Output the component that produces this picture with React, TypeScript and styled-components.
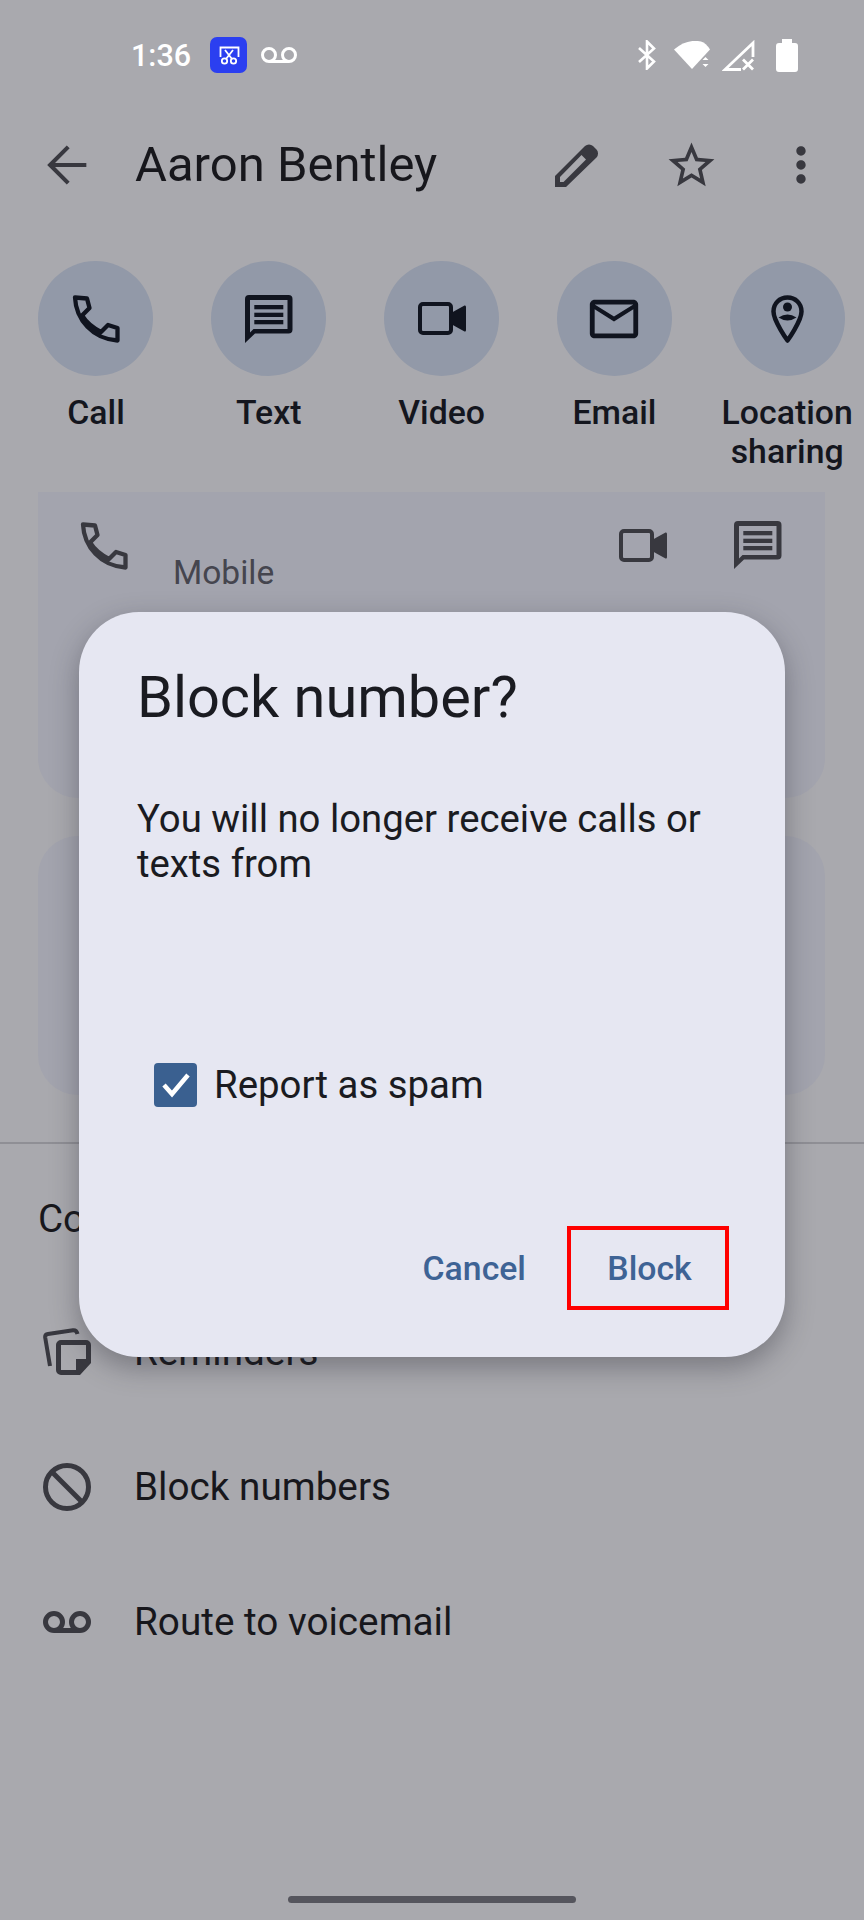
import React from "react";
import styled, { createGlobalStyle } from "styled-components";

const Global = createGlobalStyle`
  html, body { margin: 0; padding: 0; background: #a9a9ae; }
  * { box-sizing: border-box; }
`;

const Page = styled.div`
  position: relative;
  width: 864px;
  height: 1920px;
  overflow: hidden;
  display: flex;
  flex-direction: column;
  background: #a9a9ae;
  color: #17171c;
  font-family: Roboto, "Liberation Sans", sans-serif;
`;

const StatusBar = styled.div`
  height: 110px;
  flex: none;
  display: flex;
  align-items: center;
  padding: 0 66px 0 131px;
  color: #fff;
`;
const Time = styled.span`
  font-size: 30.5px;
  font-weight: 500;
  width: 60px;
  white-space: nowrap;
`;
const Badge = styled.svg`
  width: 37px;
  height: 36px;
  margin-left: 19px;
`;
const StatusGlyph = styled.svg<{ $gap?: number }>`
  display: block;
  flex: none;
  margin-left: ${(p) => p.$gap ?? 0}px;
`;
const StatusRight = styled.div`
  margin-left: auto;
  display: flex;
  align-items: center;
`;

const AppBar = styled.div`
  height: 110px;
  flex: none;
  display: flex;
  align-items: center;
  padding: 0 35px 0 38px;
  color: #38383f;
`;
const Title = styled.h1`
  margin: 0 0 0 39px;
  font-size: 49px;
  line-height: 56px;
  font-weight: 400;
  color: #17171c;
  white-space: nowrap;
`;
const AppBarActions = styled.div`
  margin-left: auto;
  display: flex;
  align-items: center;
`;
const Icon = styled.svg<{ $gap?: number }>`
  display: block;
  flex: none;
  fill: currentColor;
  margin-left: ${(p) => p.$gap ?? 0}px;
`;
const StrokeIcon = styled(Icon)`
  fill: none;
  stroke: currentColor;
  stroke-linejoin: round;
  stroke-linecap: round;
`;

const Actions = styled.div`
  display: grid;
  grid-template-columns: repeat(5, 172.8px);
  margin: 41px 0 0 9.6px;
  height: 231px;
  flex: none;
  color: #10141f;
`;
const Action = styled.div`
  display: flex;
  flex-direction: column;
  align-items: center;
`;
const Circle = styled.div`
  width: 115px;
  height: 115px;
  border-radius: 50%;
  background: #9299a8;
  display: flex;
  align-items: center;
  justify-content: center;
`;
const ActionLabel = styled.div`
  margin-top: 17px;
  font-size: 33.8px;
  line-height: 39px;
  font-weight: 500;
  text-align: center;
  white-space: pre;
  color: #14161e;
`;

const Card = styled.div<{ $h: number; $top?: boolean }>`
  flex: none;
  width: 787px;
  height: ${(p) => p.$h}px;
  margin-left: 38px;
  background: #a3a4ae;
  border-radius: ${(p) => (p.$top ? "40px" : "0")} ${(p) => (p.$top ? "40px" : "0")} 40px 40px;
`;
const NumberRow = styled.div`
  display: flex;
  align-items: flex-start;
  padding: 30px 43px 0 42px;
  color: #38383f;
`;
const NumberType = styled.div`
  margin: 33px 0 0 45px;
  font-size: 33.5px;
  line-height: 36px;
  color: #45454e;
`;
const NumberActions = styled.div`
  margin: -1px 0 0 auto;
  display: flex;
  align-items: center;
`;
const SecondCard = styled(Card)`
  margin-top: 38px;
`;
const Divider = styled.div`
  flex: none;
  height: 2px;
  margin-top: 47px;
  background: #8f8f95;
`;
const SectionTitle = styled.div`
  flex: none;
  margin: 52px 0 0 38px;
  font-size: 38.6px;
  line-height: 46px;
  white-space: nowrap;
`;
const SettingsList = styled.div`
  flex: none;
  margin-top: 42px;
  color: #38383f;
`;
const SettingRow = styled.div`
  height: 135px;
  display: flex;
  align-items: center;
`;
const SettingIcon = styled.div`
  width: 134px;
  display: flex;
  justify-content: center;
`;
const SettingText = styled.div`
  font-size: 38.7px;
  line-height: 46px;
  color: #17171c;
  white-space: nowrap;
`;
const HomeBar = styled.div`
  margin: auto auto 17px;
  width: 288px;
  height: 7px;
  border-radius: 3.5px;
  background: #55555d;
`;

const Dialog = styled.div`
  position: absolute;
  left: 79px;
  top: 612px;
  width: 706px;
  height: 745px;
  padding: 52px 0 0 58px;
  border-radius: 60px;
  background: #e6e7f2;
  box-shadow: 0 10px 28px rgba(40, 40, 50, 0.38);
  display: flex;
  flex-direction: column;
`;
const DialogTitle = styled.h2`
  margin: 0;
  font-size: 57.7px;
  line-height: 66px;
  font-weight: 400;
  color: #1a1b21;
`;
const DialogBody = styled.p`
  margin: 66px 0 0;
  width: 590px;
  font-size: 38.3px;
  line-height: 45px;
  color: #1a1b21;
`;
const SpamRow = styled.div`
  margin: 177px 0 0 17px;
  display: flex;
  align-items: center;
  gap: 17px;
  font-size: 38.4px;
  line-height: 44px;
  color: #1a1b21;
`;
const Check = styled.div`
  width: 43px;
  height: 44px;
  border-radius: 4px;
  background: #3a6090;
  display: flex;
  align-items: center;
  justify-content: center;
`;
const DialogActions = styled.div`
  margin-top: 119px;
  padding-right: 56px;
  display: flex;
  justify-content: flex-end;
  align-items: center;
  gap: 41px;
`;
const TextButton = styled.div<{ $marked?: boolean }>`
  font-size: 33.8px;
  font-weight: 500;
  line-height: 39px;
  color: #3e6395;
  ${(p) =>
    p.$marked
      ? `width: 162px; height: 84px; border: 4px solid #ff0000; display: flex; align-items: center; justify-content: center; padding-left: 3px;`
      : ""}
`;

const PhoneIcon = () => (
  <StrokeIcon width={48} height={48} viewBox="0 0 48 48" strokeWidth="4.3">
    <path d="M3 2.500L15 3.500L17.500 13L10 20.500C14 27 21 33 29 37L36 30L45.500 33V45.500C21 44 4 25 3 2.500z" />
  </StrokeIcon>
);
const VideoIcon = () => (
  <Icon width={48} height={33} viewBox="0 0 48 33">
    <rect x="2" y="2" width="31" height="29" rx="3" fill="none" stroke="currentColor" strokeWidth="4" />
    <path d="M33 11L46.500 3.500Q48 3 48 5V28Q48 30 46.500 29.500L33 22z" />
  </Icon>
);
const ChatIcon = ({ gap }: { gap?: number }) => (
  <Icon width={48} height={48} viewBox="0 0 48 48" $gap={gap}>
    <path
      fillRule="evenodd"
      d="M4 0h39.500a4 4 0 0 1 4 4v30.500a4 4 0 0 1-4 4H10L0 48V4a4 4 0 0 1 4-4zM5 5v32.500L8.500 34H42.500V5z"
    />
    <rect x="9.300" y="10" width="29" height="4.300" />
    <rect x="9.300" y="17.700" width="29" height="4.300" />
    <rect x="9.300" y="25" width="29" height="4.300" />
  </Icon>
);
const MailIcon = () => (
  <Icon width={58} height={58} viewBox="0 0 24 24">
    <path d="M22 6c0-1.100-.9-2-2-2H4c-1.100 0-2 .9-2 2v12c0 1.100.9 2 2 2h16c1.100 0 2-.9 2-2V6zm-2 0l-8 5-8-5h16zm0 12H4V8l8 5 8-5v10z" />
  </Icon>
);
const PinIcon = () => (
  <Icon width={33} height={48} viewBox="0 0 33 48">
    <path
      d="M16.500 2.500C8.500 2.500 2.500 8.500 2.500 16.500C2.500 26 16.500 45.500 16.500 45.500S30.500 26 30.500 16.500C30.500 8.500 24.500 2.500 16.500 2.500z"
      fill="none"
      stroke="currentColor"
      strokeWidth="4.500"
      strokeLinejoin="round"
    />
    <circle cx="16.500" cy="12" r="4.500" />
    <path d="M7.500 22.500Q16.500 16.500 25.500 22.500Q16.500 28.500 7.500 22.500z" />
  </Icon>
);
const VoicemailGlyph = ({ w, h, sw, gap }: { w: number; h: number; sw: number; gap?: number }) => {
  const r = (h - sw) / 2;
  return (
    <StatusGlyph width={w} height={h} viewBox={`0 0 ${w} ${h}`} $gap={gap} fill="none" stroke="currentColor" strokeWidth={sw}>
      <circle cx={sw / 2 + r} cy={h / 2} r={r} />
      <circle cx={w - sw / 2 - r} cy={h / 2} r={r} />
      <path d={`M${sw / 2 + r} ${h - sw / 2}H${w - sw / 2 - r}`} />
    </StatusGlyph>
  );
};

const actions: { label: string; icon: React.ReactNode }[] = [
  { label: "Call", icon: <PhoneIcon /> },
  { label: "Text", icon: <ChatIcon /> },
  { label: "Video", icon: <VideoIcon /> },
  { label: "Email", icon: <MailIcon /> },
  { label: "Location\nsharing", icon: <PinIcon /> },
];

export default function App() {
  return (
    <Page>
      <Global />
      <StatusBar>
        <Time>1:36</Time>
        <Badge viewBox="0 0 37 36">
          <rect width="37" height="36" rx="7" fill="#2b3ff0" />
          <path d="M10.500 20V10.500H28.500V20" fill="none" stroke="#fff" strokeWidth="1.800" />
          <path d="M15 13L22 22M23 13L16 22" fill="none" stroke="#fff" strokeWidth="1.800" />
          <circle cx="14.500" cy="24" r="2.700" fill="none" stroke="#fff" strokeWidth="1.800" />
          <circle cx="23.500" cy="24" r="2.700" fill="none" stroke="#fff" strokeWidth="1.800" />
        </Badge>
        <VoicemailGlyph w={36} h={16} sw={3} gap={14} />
        <StatusRight>
          <StatusGlyph width={20} height={30} viewBox="0 0 20 30" fill="none" stroke="#fff" strokeWidth="2.600">
            <path d="M2 8L17 21.500L10 28.500V1.500L17 8.500L2 22" />
          </StatusGlyph>
          <StatusGlyph width={36} height={28} viewBox="0 0 36 28" $gap={17} fill="#fff">
            <path d="M0 8.500Q13 -2.500 27 0.500Q32 2 36 8.500L18 28z" />
            <path d="M28.500 19L31.500 16L34.500 19zM28.500 23L31.500 26L34.500 23z" />
          </StatusGlyph>
          <StatusGlyph width={33} height={31} viewBox="0 0 33 31" $gap={12} fill="none" stroke="#fff" strokeWidth="2.800">
            <path d="M31 17V3L3 29.500H19" />
            <path d="M21 19.500L31 29.500M31 19.500L21 29.500" />
          </StatusGlyph>
          <StatusGlyph width={22} height={33} viewBox="0 0 22 33" $gap={21} fill="#fff">
            <path d="M6 0h10v4h3a3 3 0 0 1 3 3v23a3 3 0 0 1-3 3H3a3 3 0 0 1-3-3V7a3 3 0 0 1 3-3h3z" />
          </StatusGlyph>
        </StatusRight>
      </StatusBar>

      <AppBar>
        <Icon width={58} height={58} viewBox="0 0 24 24">
          <path d="M20 12H5M12.500 4.500L5 12l7.500 7.500" fill="none" stroke="currentColor" strokeWidth="1.700" />
        </Icon>
        <Title>Aaron Bentley</Title>
        <AppBarActions>
          <Icon width={44} height={44} viewBox="0 0 44 44">
            <path
              fillRule="evenodd"
              d="M0 44V33L30 3a6 6 0 0 1 8 0l3.500 3.500a6 6 0 0 1 0 8L11 44zM5 39h3.500L31 16.500 26.500 12 5 34z"
            />
          </Icon>
          <Icon width={55} height={55} viewBox="0 0 24 24" $gap={65}>
            <path d="M22 9.240l-7.190-.62L12 2 9.190 8.630 2 9.240l5.460 4.730L5.820 21 12 17.270 18.180 21l-1.630-7.030L22 9.240zM12 15.400l-3.760 2.270 1-4.280-3.320-2.880 4.380-.38L12 6.100l1.710 4.040 4.380.38-3.320 2.880 1 4.280L12 15.400z" />
          </Icon>
          <Icon width={56} height={56} viewBox="0 0 24 24" $gap={54}>
            <path d="M12 8c1.100 0 2-.9 2-2s-.9-2-2-2-2 .9-2 2 .9 2 2 2zm0 2c-1.100 0-2 .9-2 2s.9 2 2 2 2-.9 2-2-.9-2-2-2zm0 6c-1.100 0-2 .9-2 2s.9 2 2 2 2-.9 2-2-.9-2-2-2z" />
          </Icon>
        </AppBarActions>
      </AppBar>

      <Actions>
        {actions.map((a) => (
          <Action key={a.label}>
            <Circle>{a.icon}</Circle>
            <ActionLabel>{a.label}</ActionLabel>
          </Action>
        ))}
      </Actions>

      <Card $h={306}>
        <NumberRow>
          <PhoneIcon />
          <NumberType>Mobile</NumberType>
          <NumberActions>
            <VideoIcon />
            <ChatIcon gap={67} />
          </NumberActions>
        </NumberRow>
      </Card>
      <SecondCard $h={259} $top />
      <Divider />
      <SectionTitle>Contact settings</SectionTitle>
      <SettingsList>
        <SettingRow>
          <SettingIcon>
            <Icon width={48} height={47} viewBox="0 0 48 47">
              <path d="M7 38L2.200 9.500Q1.800 6.500 5 6L30 2.200Q33.500 1.800 34.500 6" fill="none" stroke="currentColor" strokeWidth="4" />
              <path
                fillRule="evenodd"
                d="M18 12h25a5 5 0 0 1 5 5v18L37 47H18a5 5 0 0 1-5-5V17a5 5 0 0 1 5-5zM18 17v25h15V31h10V17z"
              />
            </Icon>
          </SettingIcon>
          <SettingText>Reminders</SettingText>
        </SettingRow>
        <SettingRow>
          <SettingIcon>
            <Icon width={48} height={48} viewBox="0 0 48 48">
              <circle cx="24" cy="24" r="21.500" fill="none" stroke="currentColor" strokeWidth="5" />
              <path d="M9 9L39 39" fill="none" stroke="currentColor" strokeWidth="5" />
            </Icon>
          </SettingIcon>
          <SettingText>Block numbers</SettingText>
        </SettingRow>
        <SettingRow>
          <SettingIcon>
            <VoicemailGlyph w={48} h={22} sw={5} />
          </SettingIcon>
          <SettingText>Route to voicemail</SettingText>
        </SettingRow>
      </SettingsList>
      <HomeBar />

      <Dialog>
        <DialogTitle>Block number?</DialogTitle>
        <DialogBody>You will no longer receive calls or texts from</DialogBody>
        <SpamRow>
          <Check>
            <svg width="30" height="26" viewBox="0 0 30 26" fill="none" stroke="#fff" strokeWidth="4.500">
              <path d="M3 13L11 22L27 3" />
            </svg>
          </Check>
          Report as spam
        </SpamRow>
        <DialogActions>
          <TextButton>Cancel</TextButton>
          <TextButton $marked>Block</TextButton>
        </DialogActions>
      </Dialog>
    </Page>
  );
}
